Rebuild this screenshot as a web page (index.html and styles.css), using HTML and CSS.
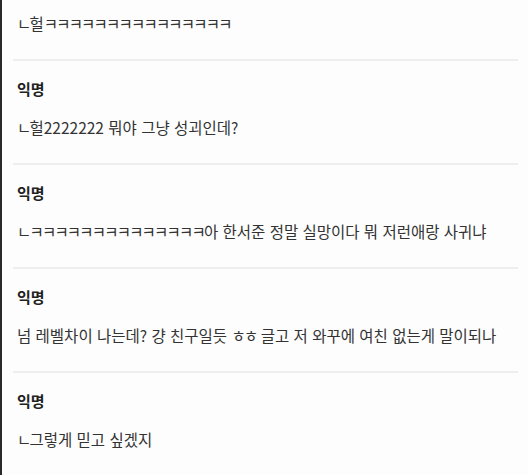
FILE: index.html
```html
<!DOCTYPE html>
<html lang="ko">

    <head>
        <meta charset="UTF-8">
        <meta name="viewport" content="width=device-width, initial-scale=1.0">
        <title>댓글</title>

        <link rel="stylesheet" href="styles.css">

    </head>

    <body>
        <div class="page">
            <ul class="comments">
                <li class="comment comment-cut">
                    <p class="comment-text"><span class="jamo">ㄴ</span>헐<span class="jamo">ㅋㅋㅋㅋㅋㅋㅋㅋㅋㅋㅋㅋㅋㅋㅋ</span></p>
                </li>
                <li class="comment">
                    <div class="comment-name">익명</div>
                    <p class="comment-text"><span class="jamo">ㄴ</span>헐2222222 뭐야 그냥 성괴인데?</p>
                </li>
                <li class="comment">
                    <div class="comment-name">익명</div>
                    <p class="comment-text"><span class="jamo">ㄴㅋㅋㅋㅋㅋㅋㅋㅋㅋㅋㅋㅋㅋㅋ</span>아 한서준 정말 실망이다 뭐 저런애랑 사귀냐</p>
                </li>
                <li class="comment">
                    <div class="comment-name">익명</div>
                    <p class="comment-text">넘 레벨차이 나는데? 걍 친구일듯 <span class="jamo">ㅎㅎ</span> 글고 저 와꾸에 여친 없는게 말이되나</p>
                </li>
                <li class="comment comment-last">
                    <div class="comment-name">익명</div>
                    <p class="comment-text"><span class="jamo">ㄴ</span>그렇게 믿고 싶겠지</p>
                </li>
            </ul>
        </div>
    </body>

</html>
```

FILE: styles.css
```css
* {
    margin: 0;
    padding: 0;
    box-sizing: border-box;
}

body {
    font-family: "Noto Sans CJK KR", "Noto Sans", sans-serif;
    background-color: #fdfdfd;
    color: #333;
}

.page {
    min-height: 475px;
    border-left: 2px solid #2a2a2a;
    overflow: hidden;
}

.comments {
    list-style-type: none;
    margin: 0 10px 0 11px;
}

.comment {
    padding: 16px 4px 24px;
    border-bottom: 2px solid #eeeeee;
}

.comment-cut {
    padding-top: 11px;
    padding-bottom: 24px;
}

.comment-last {
    border-bottom: none;
}

.comment-name {
    font-size: 15px;
    font-weight: bold;
    line-height: 24px;
    color: #222;
    margin-bottom: 14px;
}

.comment-text {
    font-size: 15.5px;
    line-height: 24px;
    color: #333;
}

/* single jamo are set tighter than full syllables */
.jamo {
    letter-spacing: -1.8px;
}
```
